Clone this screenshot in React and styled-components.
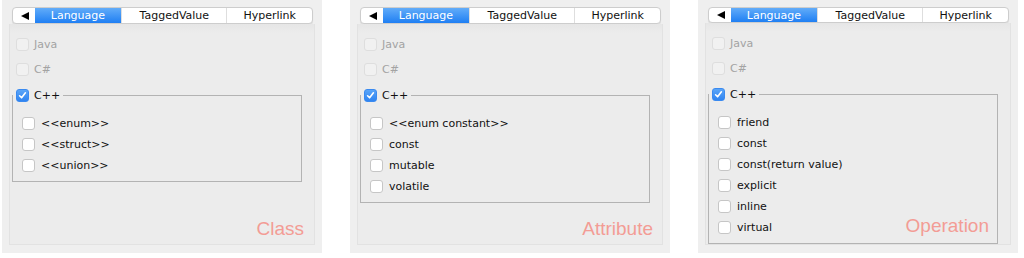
import React from "react";
import styled, { createGlobalStyle } from "styled-components";

const GlobalStyle = createGlobalStyle`
  body {
    margin: 0;
    background: #ffffff;
    font-family: "DejaVu Sans", "Liberation Sans", sans-serif;
  }
`;

const panels = [
  {
    items: ["<<enum>>", "<<struct>>", "<<union>>"],
    label: "Class",
    right: 18,
    top: 219,
  },
  {
    items: ["<<enum constant>>", "const", "mutable", "volatile"],
    label: "Attribute",
    right: 17,
    top: 219,
  },
  {
    items: [
      "friend",
      "const",
      "const(return value)",
      "explicit",
      "inline",
      "virtual",
    ],
    label: "Operation",
    right: 29,
    top: 216,
  },
];

const tabs = [
  { name: "Language", width: 88, active: true },
  { name: "TaggedValue", width: 106 },
  { name: "Hyperlink", width: 86 },
];

function CheckBox({ checked, disabled }) {
  return (
    <Box $checked={checked} $disabled={disabled}>
      {checked && (
        <svg width="9" height="9" viewBox="0 0 9 9">
          <path
            d="M1.6 4.8 L3.6 6.8 L7.4 1.8"
            fill="none"
            stroke="#fff"
            strokeWidth="1.6"
            strokeLinecap="round"
            strokeLinejoin="round"
          />
        </svg>
      )}
    </Box>
  );
}

function Panel({ items, label, right, top }) {
  return (
    <Outer>
      <TabBar>
        <ArrowTab>
          <Triangle />
        </ArrowTab>
        {tabs.map((t) => (
          <Tab key={t.name} $width={t.width} $active={t.active}>
            {t.name}
          </Tab>
        ))}
      </TabBar>
      <Inner>
        <Row $disabled>
          <CheckBox disabled />
          <span>Java</span>
        </Row>
        <Row $disabled>
          <CheckBox disabled />
          <span>C#</span>
        </Row>
        <Group>
          <Legend>
            <CheckBox checked />
            <span>C++</span>
          </Legend>
          <ItemList>
            {items.map((it) => (
              <Item key={it}>
                <CheckBox />
                <span>{it}</span>
              </Item>
            ))}
          </ItemList>
        </Group>
      </Inner>
      <Label $right={right} $top={top}>
        {label}
      </Label>
    </Outer>
  );
}

export default function App() {
  return (
    <>
      <GlobalStyle />
      <Page>
        {panels.map((p) => (
          <Panel key={p.label} {...p} />
        ))}
      </Page>
    </>
  );
}

const Page = styled.div`
  display: flex;
  gap: 28px;
  padding-left: 2px;
  height: 258px;
  box-sizing: border-box;
`;

const Outer = styled.div`
  position: relative;
  width: 320px;
  height: 253px;
  box-sizing: border-box;
  background: #efefef;
  padding: 7px 7px 8px 7px;
  display: flex;
  flex-direction: column;
`;

const TabBar = styled.div`
  display: flex;
  height: 17px;
  margin: 0 2px 0 3px;
  background: #ffffff;
  border: 1px solid #cdcdcd;
  border-radius: 4px;
  overflow: hidden;
  box-shadow: 0 1px 1px rgba(0, 0, 0, 0.08);
  box-sizing: border-box;
  font-size: 11px;
  color: #111;
`;

const ArrowTab = styled.div`
  width: 20px;
  display: flex;
  align-items: center;
  justify-content: center;
  padding-left: 2px;
`;

const Triangle = styled.div`
  width: 0;
  height: 0;
  border-top: 4px solid transparent;
  border-bottom: 4px solid transparent;
  border-right: 8px solid #000;
`;

const Tab = styled.div`
  width: ${(p) => p.$width}px;
  display: flex;
  align-items: center;
  justify-content: center;
  line-height: 15px;
  border-left: ${(p) => (p.$active ? "none" : "1px solid #dedede")};
  background: ${(p) =>
    p.$active ? "linear-gradient(#62acf9, #1f7ff3)" : "transparent"};
  color: ${(p) => (p.$active ? "#ffffff" : "#111")};
`;

const Inner = styled.div`
  flex: 1;
  border: 1px solid #e2e2e2;
  border-top: none;
  background: linear-gradient(#e6e6e6 0px, #ececec 9px, #ececec 100%);
  padding: 8px 0 0 0;
  font-size: 11px;
`;

const Row = styled.div`
  display: flex;
  align-items: center;
  height: 25px;
  padding-left: 6px;
  gap: 5px;
  color: ${(p) => (p.$disabled ? "#a3a3a3" : "#111")};
`;

const Box = styled.span`
  width: 13px;
  height: 13px;
  box-sizing: border-box;
  border-radius: 3px;
  display: inline-flex;
  align-items: center;
  justify-content: center;
  flex-shrink: 0;
  border: 1px solid
    ${(p) => (p.$checked ? "#3a8af0" : p.$disabled ? "#dedede" : "#c6c6c6")};
  background: ${(p) =>
    p.$checked
      ? "linear-gradient(#5aa5f8, #2f84f1)"
      : p.$disabled
      ? "#f1f1f1"
      : "#ffffff"};
`;

const Group = styled.fieldset`
  margin: 7px 12px 0 2px;
  padding: 0;
  border: 1px solid #b3b3b3;
  min-width: 0;
`;

const Legend = styled.legend`
  display: flex;
  align-items: center;
  gap: 5px;
  padding: 0 3px;
  margin: 0;
  height: 13px;
  line-height: 13px;
  color: #111;
`;

const ItemList = styled.div`
  padding: 11px 0 5px 9px;
`;

const Item = styled.div`
  display: flex;
  align-items: center;
  height: 21px;
  gap: 6px;
  color: #111;
`;

const Label = styled.div`
  position: absolute;
  right: ${(p) => p.$right}px;
  top: ${(p) => p.$top}px;
  font-family: "Liberation Sans", Arial, sans-serif;
  font-size: 19px;
  line-height: 19px;
  color: #f39c95;
`;
